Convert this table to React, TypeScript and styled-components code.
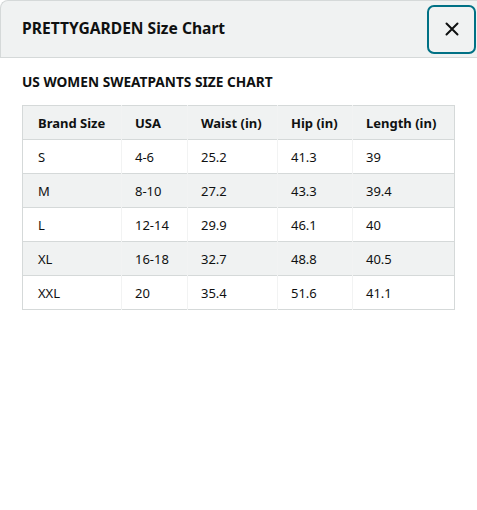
import * as React from 'react';
import styled, { createGlobalStyle } from 'styled-components';

const GlobalStyle = createGlobalStyle`
    html, body {
        margin: 0;
        padding: 0;
        background: #ffffff;
    }
    body {
        font-family: "Noto Sans", "Open Sans", Arial, sans-serif;
        color: #0f1111;
    }
`;

const Modal = styled.section`
    width: 477px;
    height: 510px;
    background: #ffffff;
    overflow: hidden;
`;

const Header = styled.header`
    display: flex;
    align-items: center;
    justify-content: space-between;
    height: 56px;
    padding: 0 0 0 21px;
    background: #f0f2f2;
    border: 1px solid #d5d9d9;
    border-right: none;
    border-radius: 8px 0 0 0;
`;

const Title = styled.h1`
    margin: 0 0 2px;
    font-size: 15.6px;
    font-weight: 700;
    line-height: 20px;
`;

const CloseButton = styled.button`
    display: flex;
    align-items: center;
    justify-content: center;
    width: 49px;
    height: 49px;
    margin-right: 1px;
    padding: 0;
    border: 2px solid #007185;
    border-radius: 7px;
    background: transparent;
    color: #0f1111;
    cursor: pointer;
`;

const Body = styled.div`
    padding: 15px 22px;
`;

const Subtitle = styled.h2`
    margin: 0 0 14px;
    font-size: 13.7px;
    font-weight: 700;
    line-height: 18px;
`;

const Table = styled.table`
    border-collapse: collapse;
    table-layout: fixed;
    width: 432px;
    border: 1px solid #d5d9d9;
    font-size: 13px;
`;

const Row = styled.tr<{ $shaded: boolean }>`
    height: 34px;
    background: ${p => (p.$shaded ? '#f0f2f2' : '#ffffff')};
    border-bottom: 1px solid #d5d9d9;
`;

const Cell = styled.td<{ $head?: boolean }>`
    padding: 0 0 0 13px;
    font-weight: ${p => (p.$head ? 700 : 400)};
    text-align: left;
    white-space: nowrap;
    border-left: 1px solid #f2f3f3;

    &:first-child {
        padding-left: 15px;
        border-left: none;
    }
`;

const widths = [99, 66, 90, 75, 102];
const head = ['Brand Size', 'USA', 'Waist (in)', 'Hip (in)', 'Length (in)'];
const rows = [
    ['S', '4-6', '25.2', '41.3', '39'],
    ['M', '8-10', '27.2', '43.3', '39.4'],
    ['L', '12-14', '29.9', '46.1', '40'],
    ['XL', '16-18', '32.7', '48.8', '40.5'],
    ['XXL', '20', '35.4', '51.6', '41.1'],
];

const CloseIcon = () => (
    <svg width="14" height="14" viewBox="0 0 14 14" fill="none">
        <path d="M1.5 1.5 L12.5 12.5 M12.5 1.5 L1.5 12.5" stroke="#0f1111" strokeWidth="2" strokeLinecap="round" />
    </svg>
);

const App: React.FC = () => {
    return (
        <>
            <GlobalStyle />
            <Modal>
                <Header>
                    <Title>PRETTYGARDEN Size Chart</Title>
                    <CloseButton aria-label="Close">
                        <CloseIcon />
                    </CloseButton>
                </Header>
                <Body>
                    <Subtitle>US WOMEN SWEATPANTS SIZE CHART</Subtitle>
                    <Table>
                        <colgroup>
                            {widths.map((w, i) => (
                                <col key={i} style={{ width: w }} />
                            ))}
                        </colgroup>
                        <tbody>
                            <Row $shaded>
                                {head.map(h => (
                                    <Cell key={h} $head>
                                        {h}
                                    </Cell>
                                ))}
                            </Row>
                            {rows.map((r, i) => (
                                <Row key={r[0]} $shaded={i % 2 === 1}>
                                    {r.map((c, j) => (
                                        <Cell key={j}>{c}</Cell>
                                    ))}
                                </Row>
                            ))}
                        </tbody>
                    </Table>
                </Body>
            </Modal>
        </>
    );
};

export default App;
